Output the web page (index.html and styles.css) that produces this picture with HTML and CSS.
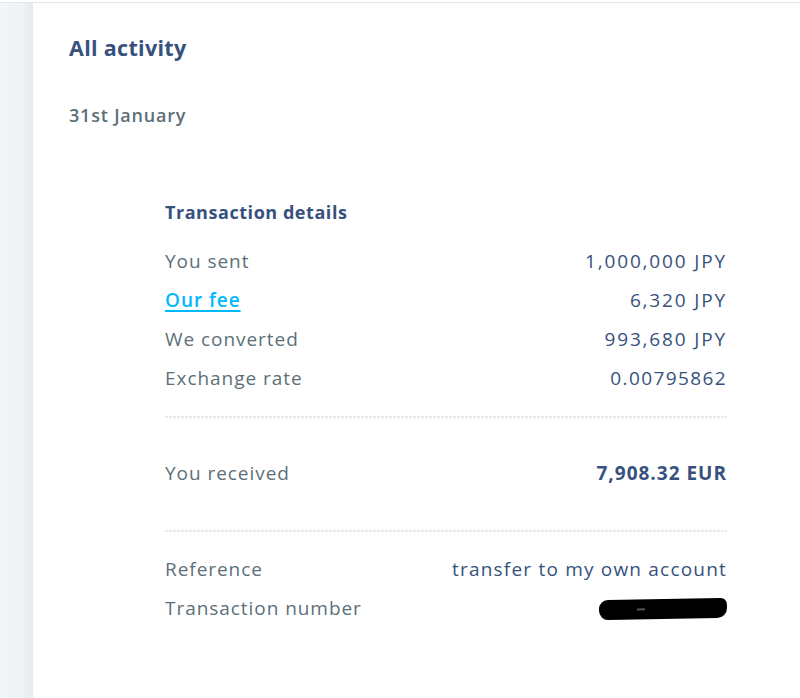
FILE: index.html
```html
<!DOCTYPE html>
<html>
<head>
<meta charset="utf-8">
<link rel="stylesheet" href="styles.css">
</head>
<body>
<div class="topbar"></div>
<div class="layout">
  <div class="rail"></div>
  <main class="panel">
    <h1 class="title">All activity</h1>
    <div class="date">31st January</div>
    <section class="details">
      <h2 class="details-title">Transaction details</h2>
      <div class="row"><span class="label">You sent</span><span class="value amount">1,000,000 JPY</span></div>
      <div class="row"><a class="label link" href="#">Our fee</a><span class="value amount">6,320 JPY</span></div>
      <div class="row"><span class="label">We converted</span><span class="value amount">993,680 JPY</span></div>
      <div class="row"><span class="label">Exchange rate</span><span class="value rate">0.00795862</span></div>
      <div class="sep"></div>
      <div class="row total"><span class="label">You received</span><span class="value strong">7,908.32 EUR</span></div>
      <div class="sep"></div>
      <div class="row"><span class="label">Reference</span><span class="value ref">transfer to my own account</span></div>
      <div class="row"><span class="label">Transaction number</span><span class="value"><span class="redact"><span class="redact-mark"></span></span></span></div>
    </section>
  </main>
</div>
</body>
</html>
```
FILE: styles.css
```css
html, body {
  margin: 0;
  padding: 0;
  background: #ffffff;
  font-family: "Open Sans", Lato, sans-serif;
}
.topbar {
  height: 2px;
  border-bottom: 1px solid #e2e7ec;
  background: #ffffff;
}
.layout {
  display: flex;
  height: 695px;
}
.rail {
  width: 33px;
  flex: none;
  background: linear-gradient(to right, #f3f6f8 0%, #eff2f5 70%, #e8ebee 100%);
}
.panel {
  flex: 1;
  padding: 0 0 0 36px;
}
.title {
  margin: 32px 0 0 0;
  font-size: 21.5px;
  line-height: 26px;
  font-weight: 700;
  color: #37517e;
  letter-spacing: 0.3px;
}
.date {
  margin-top: 43px;
  font-size: 18px;
  line-height: 22px;
  font-weight: 600;
  color: #5d7079;
  letter-spacing: 0.8px;
}
.details {
  margin: 75px 0 0 96px;
  width: 562px;
}
.details-title {
  margin: 0 0 18px 0;
  font-size: 18px;
  line-height: 22px;
  font-weight: 700;
  color: #37517e;
  letter-spacing: 0.55px;
}
.row {
  display: flex;
  justify-content: space-between;
  align-items: center;
  height: 39px;
  font-size: 19px;
  letter-spacing: 0.95px;
}
.label {
  color: #5d7079;
}
.link {
  color: #00b9ff;
  text-decoration: underline;
  text-decoration-thickness: 2px;
  text-underline-offset: 3px;
  font-weight: 600;
}
.value {
  color: #37517e;
}
.amount {
  letter-spacing: 1.85px;
}
.rate {
  letter-spacing: 1.4px;
}
.ref {
  letter-spacing: 1.2px;
}
.strong {
  font-weight: 700;
  letter-spacing: 1px;
}
.sep {
  height: 2px;
  margin: 19px 0 17px 0;
  background: repeating-linear-gradient(to right, #e6e9eb 0, #e6e9eb 3px, transparent 3px, transparent 4px);
}
.row.total {
  height: 76px;
}
.redact {
  display: inline-block;
  position: relative;
  width: 128px;
  height: 20px;
  background: #000000;
  border-radius: 9px 6px 10px 9px;
  vertical-align: middle;
  transform: rotate(-1deg);
}
.redact-mark {
  position: absolute;
  left: 38px;
  top: 9px;
  width: 8px;
  height: 2px;
  background: #555555;
}
```
